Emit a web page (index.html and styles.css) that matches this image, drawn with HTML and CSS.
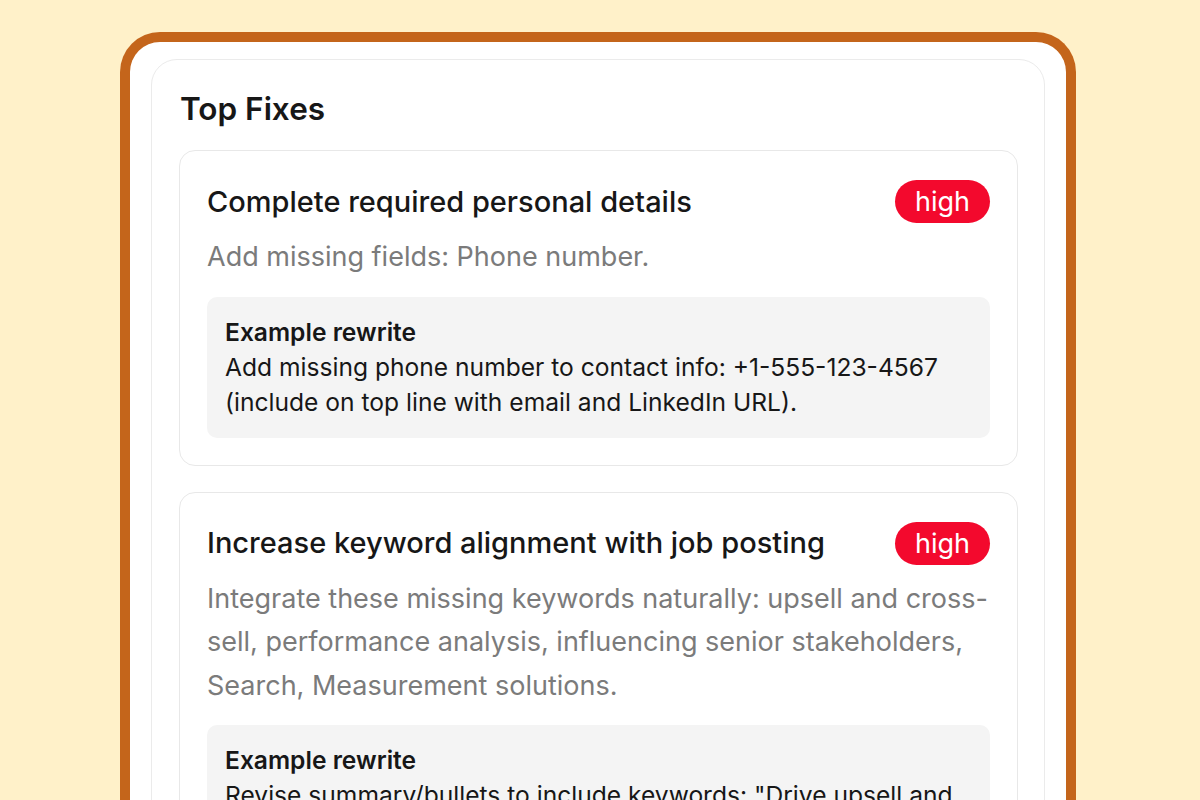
FILE: index.html
```html
<!DOCTYPE html>
<html lang="en">
<head>
<meta charset="utf-8">
<title>Top Fixes</title>
<link rel="stylesheet" href="styles.css">
</head>
<body>
<div class="stage">
  <div class="frame">
    <section class="panel">
      <h2 class="panel-title">Top Fixes</h2>
      <article class="fix">
        <div class="fix-head">
          <h3 class="fix-title">Complete required personal details</h3>
          <span class="badge">high</span>
        </div>
        <p class="fix-desc">Add missing fields: Phone number.</p>
        <div class="example">
          <div class="example-label">Example rewrite</div>
          <div class="example-body">Add missing phone number to contact info: +1-555-123-4567 (include on top line with email and LinkedIn URL).</div>
        </div>
      </article>
      <article class="fix">
        <div class="fix-head">
          <h3 class="fix-title">Increase keyword alignment with job posting</h3>
          <span class="badge">high</span>
        </div>
        <p class="fix-desc">Integrate these missing keywords naturally: upsell and cross-sell, performance analysis, influencing senior stakeholders, Search, Measurement solutions.</p>
        <div class="example">
          <div class="example-label">Example rewrite</div>
          <div class="example-body">Revise summary/bullets to include keywords: "Drive upsell and cross-sell opportunities through performance analysis and influencing senior stakeholders across Search and Measurement solutions."</div>
        </div>
      </article>
    </section>
  </div>
</div>
</body>
</html>
```

FILE: styles.css
```css
html, body {
  margin: 0;
  padding: 0;
  height: 100%;
  overflow: hidden;
}
body {
  background: #fff1c9;
  font-family: Inter, "Noto Sans", "Liberation Sans", sans-serif;
  color: #171717;
}
.stage {
  padding: 32px 0 0 120px;
}
.frame {
  width: 956px;
  box-sizing: border-box;
  border: 10px solid #c4651b;
  border-bottom: none;
  border-radius: 40px 40px 0 0;
  background: #ffffff;
  padding: 17px 21px 0 21px;
  min-height: 900px;
}
.panel {
  border: 1px solid #ebebeb;
  border-radius: 26px;
  padding: 27px 26px 40px 27px;
}
.panel-title {
  margin: 0 0 19px 0;
  font-size: 31.5px;
  line-height: 44px;
  font-weight: 600;
  padding-left: 1px;
}
.fix {
  border: 1px solid #e8e8e8;
  border-radius: 16px;
  padding: 29px 27px 27px 27px;
  margin-bottom: 26px;
}
.fix-head {
  display: flex;
  align-items: center;
  justify-content: space-between;
  gap: 20px;
}
.fix-title {
  margin: 0;
  font-size: 29px;
  line-height: 40px;
  font-weight: 500;
  color: #171717;
}
.badge {
  flex: none;
  background: #f3092d;
  color: #ffffff;
  font-size: 27px;
  line-height: 43px;
  height: 43px;
  padding: 0 20px;
  border-radius: 22px;
}
.fix-desc {
  margin: 12px 0 0 0;
  font-size: 27px;
  line-height: 43.5px;
  color: #7b7b7b;
}
.example {
  margin-top: 18px;
  background: #f4f4f4;
  border-radius: 10px;
  padding: 18px 18px;
}
.example-label {
  font-size: 24.6px;
  line-height: 35px;
  font-weight: 600;
  color: #171717;
}
.example-body {
  font-size: 24.6px;
  line-height: 35px;
  color: #171717;
}
```
